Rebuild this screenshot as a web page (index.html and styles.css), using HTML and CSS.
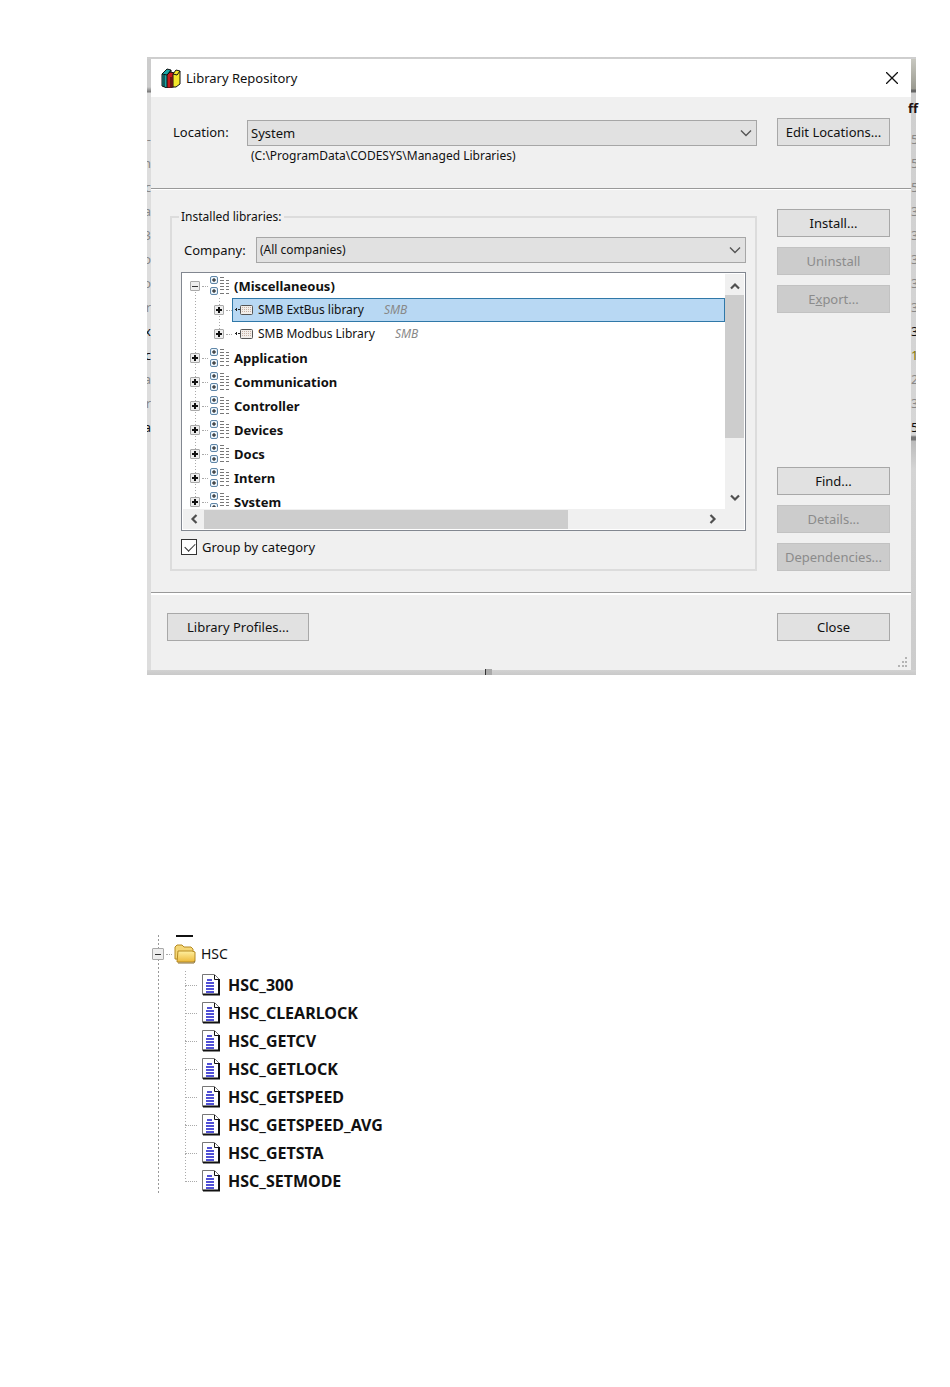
FILE: index.html
```html
<!DOCTYPE html>
<html lang="en">
<head>
<meta charset="utf-8">
<title>Library Repository</title>
<link rel="stylesheet" href="styles.css">
</head>
<body>
<svg class="defs" aria-hidden="true">
  <symbol id="cat" viewBox="0 0 20 20">
    <g fill="#eaf3fa" stroke="#5f86a8"><rect x=".5" y=".5" width="7" height="7" rx="1.500"/><rect x=".5" y="11.500" width="7" height="7" rx="1.500"/></g>
    <path d="M2 4h4M4 2v4M2 15h4M4 13v4" stroke="#111"/>
    <path d="M10 1.500h4M10 4.500h4M10 7.500h4M10 10.500h4M10 13.500h4M10 17.500h4M16 4.500h3M16 7.500h3M16 10.500h3M16 13.500h3M16 17.500h3" stroke="#777"/>
  </symbol>
  <symbol id="lib" viewBox="0 0 18 12">
    <path d="M0 5.500h2M3 5.500h3M1.500 4v3" stroke="#222"/>
    <rect x="5.500" y="1.500" width="12" height="9" rx="1" fill="#f2eeea" stroke="#555"/>
    <path d="M7 3.500h9M7 5.500h9M7 7.500h9" stroke="#c9b3a6" stroke-dasharray="1 1"/>
  </symbol>
  <symbol id="doc" viewBox="0 0 18 22">
    <path d="M.5 .5h12l5 5v15H.5z" fill="#fff" stroke="#777"/>
    <path d="M12.500 1v4.500h5" fill="none" stroke="#111"/>
    <path d="M17 5v15.500H1" fill="none" stroke="#111" stroke-width="2"/>
    <path d="M5 6h5M4 9h8M4 12h8M4 15h8M4 18h8" stroke="#1717c8" stroke-width="1.600"/>
  </symbol>
  <symbol id="chev" viewBox="0 0 12 8"><path d="M1 1.500l5 5 5-5" fill="none" stroke="#555" stroke-width="1.400"/></symbol>
  <symbol id="arrow" viewBox="0 0 10 8"><path d="M1 1.500l4 4 4-4" fill="none" stroke="#505050" stroke-width="2.200"/></symbol>
</svg>
<main class="page">
  <section class="shot">
    <div class="edge edge-left" aria-hidden="true">
      <i>-</i><i>n</i><i>c</i><i>a</i><i>3</i><i>o</i><i>o</i><i>r</i><i class="dark">x</i><i class="dark">c</i><i>a</i><i>r</i><i class="dark">a</i>
    </div>
    <div class="dialog" role="dialog" aria-labelledby="dlg-title">
      <header class="titlebar">
        <svg class="books" viewBox="0 0 20 20"><path d="M1 6l5-5 4 1v16l-4 2-5-2z" fill="#1aa5a5" stroke="#111"/><path d="M3 7v12M1 6l5 1 4-5" stroke="#111" fill="none"/><path d="M6 7l3-3 5 1v13l-4 2H6z" fill="#c51a1a" stroke="#111"/><path d="M10 9v10" stroke="#111"/><path d="M12 6l3-4 4 1v13l-4 3h-3z" fill="#f4e62a" stroke="#111"/><path d="M12 6l4 1 3-4" stroke="#111" fill="none"/></svg>
        <h1 id="dlg-title">Library Repository</h1>
        <button class="close" aria-label="Close window"><svg viewBox="0 0 12 12"><path d="M0 0l12 12M12 0L0 12" stroke="#111" stroke-width="1.300"/></svg></button>
      </header>
      <div class="location">
        <label for="loc">Location:</label>
        <div class="loc-field">
          <div class="combo"><select id="loc"><option>System</option></select><svg class="chev"><use href="#chev"/></svg></div>
          <p>(C:\ProgramData\CODESYS\Managed Libraries)</p>
        </div>
        <button class="btn">Edit Locations...</button>
      </div>
      <div class="content">
        <fieldset class="group">
          <legend>Installed libraries:</legend>
          <div class="company">
            <label for="comp">Company:</label>
            <div class="combo small"><select id="comp"><option>(All companies)</option></select><svg class="chev"><use href="#chev"/></svg></div>
          </div>
          <div class="treebox">
            <ul class="tree">
              <li><div class="row"><button class="exp minus" aria-label="Collapse"></button><span class="dots"></span><svg class="cat"><use href="#cat"/></svg><b>(Miscellaneous)</b></div>
                <ul>
                  <li class="row"><button class="exp" aria-label="Expand"></button><span class="dots"></span><div class="leaf selected"><svg class="lib"><use href="#lib"/></svg><span>SMB ExtBus library</span><em>SMB</em></div></li>
                  <li class="row"><button class="exp" aria-label="Expand"></button><span class="dots"></span><div class="leaf"><svg class="lib"><use href="#lib"/></svg><span>SMB Modbus Library</span><em>SMB</em></div></li>
                </ul>
              </li>
              <li class="row"><button class="exp" aria-label="Expand"></button><span class="dots"></span><svg class="cat"><use href="#cat"/></svg><b>Application</b></li>
              <li class="row"><button class="exp" aria-label="Expand"></button><span class="dots"></span><svg class="cat"><use href="#cat"/></svg><b>Communication</b></li>
              <li class="row"><button class="exp" aria-label="Expand"></button><span class="dots"></span><svg class="cat"><use href="#cat"/></svg><b>Controller</b></li>
              <li class="row"><button class="exp" aria-label="Expand"></button><span class="dots"></span><svg class="cat"><use href="#cat"/></svg><b>Devices</b></li>
              <li class="row"><button class="exp" aria-label="Expand"></button><span class="dots"></span><svg class="cat"><use href="#cat"/></svg><b>Docs</b></li>
              <li class="row"><button class="exp" aria-label="Expand"></button><span class="dots"></span><svg class="cat"><use href="#cat"/></svg><b>Intern</b></li>
              <li class="row"><button class="exp" aria-label="Expand"></button><span class="dots"></span><svg class="cat"><use href="#cat"/></svg><b>System</b></li>
            </ul>
            <div class="vbar"><svg class="arrow up"><use href="#arrow"/></svg><span class="thumb"></span><svg class="arrow"><use href="#arrow"/></svg></div>
            <div class="hbar"><svg class="arrow left"><use href="#arrow"/></svg><span class="track"><span class="thumb"></span></span><svg class="arrow right"><use href="#arrow"/></svg></div>
          </div>
          <label class="check"><input type="checkbox" checked>Group by category</label>
        </fieldset>
        <div class="side">
          <button class="btn">Install...</button>
          <button class="btn" disabled>Uninstall</button>
          <button class="btn" disabled>E<u>x</u>port...</button>
          <button class="btn push">Find...</button>
          <button class="btn" disabled>Details...</button>
          <button class="btn" disabled>Dependencies...</button>
        </div>
      </div>
      <footer class="foot">
        <button class="btn wide">Library Profiles...</button>
        <button class="btn">Close</button>
        <svg class="grip" viewBox="0 0 10 10"><path d="M7 0h2v2H7zM4 4h2v2H4zM7 4h2v2H7zM0 8h2v2H0zM4 8h2v2H4zM7 8h2v2H7z" fill="#b4b4b4"/></svg>
      </footer>
    </div>
    <div class="edge edge-right" aria-hidden="true">
      <b class="head">ff</b>
      <i>5</i><i>5</i><i>5</i><i>3</i><i>3</i><i>3</i><i>3</i><i>3</i><i class="dark">3</i><i class="dark mark">1</i><i>2</i><i>3</i><i class="dark">5</i>
    </div>
    <span class="tick"></span>
  </section>

  <section class="hsc">
    <span class="dash"></span>
    <div class="hsc-root"><button class="exp minus" aria-label="Collapse"></button><span class="dots"></span>
      <svg class="folder" viewBox="0 0 22 20"><defs><linearGradient id="fg" x1="0" y1="0" x2="0" y2="1"><stop offset="0" stop-color="#fff0a0"/><stop offset="1" stop-color="#edb93a"/></linearGradient></defs><path d="M1 15V3l2-2h5l2 2h7l2 2v11z" fill="#f5d777" stroke="#b58a22"/><path d="M4 7h14l3 1v9l-2 1H3z" fill="url(#fg)" stroke="#b58a22"/><path d="M4 19h16l1-2" fill="none" stroke="#8a6f30"/></svg>
      <span>HSC</span></div>
    <ul class="hsc-list">
      <li><svg><use href="#doc"/></svg><b>HSC_300</b></li>
      <li><svg><use href="#doc"/></svg><b>HSC_CLEARLOCK</b></li>
      <li><svg><use href="#doc"/></svg><b>HSC_GETCV</b></li>
      <li><svg><use href="#doc"/></svg><b>HSC_GETLOCK</b></li>
      <li><svg><use href="#doc"/></svg><b>HSC_GETSPEED</b></li>
      <li><svg><use href="#doc"/></svg><b>HSC_GETSPEED_AVG</b></li>
      <li><svg><use href="#doc"/></svg><b>HSC_GETSTA</b></li>
      <li><svg><use href="#doc"/></svg><b>HSC_SETMODE</b></li>
    </ul>
  </section>
</main>
</body>
</html>
```
FILE: styles.css
```css
* { box-sizing: border-box; }
body { margin: 0; background: #fff; color: #111; font: 13px/16px "Noto Sans", sans-serif; }
ul, p, h1, fieldset { margin: 0; padding: 0; }
ul { list-style: none; }
button, select { font: inherit; color: inherit; padding: 0; }
svg { display: block; flex: none; }
.defs { position: absolute; width: 0; height: 0; }
.page { padding: 57px 34px 0 147px; }

.shot { position: relative; display: grid; grid-template-columns: 4px 1fr 5px; padding: 2px 0 5px; background: linear-gradient(#cdcdcd, #d8d8d8 8px, #d8d8d8 calc(100% - 8px), #c9c9c9); }
.edge { position: relative; padding-top: 68px; color: #888; background: linear-gradient(#ccc 28px, #999 31px, #777 33px, #ddd 34px); }
.edge i { display: block; height: 24px; line-height: 24px; font-style: normal; direction: rtl; overflow: hidden; }
.edge .dark { color: #111; }
.edge-right { background: linear-gradient(#c8c8c0, #9a9a90 30px, #666 31px, #666 33px, #cfcfcf 34px, #d6d6d6 376px, #777 378px, #777 381px, #bbb 382px, #d4d4d4 410px, #ccc); padding-top: 40px; }
.edge-right i { direction: ltr; }
.edge-right .head { display: block; height: 28px; margin-left: -3px; line-height: 18px; color: #211; }
.edge-right .mark { color: #870; }
.tick { position: absolute; left: 44%; bottom: 0; width: 7px; height: 6px; border-left: 1px solid #333; background: #aaa; }

.dialog { background: #f0f0f0; min-width: 0; }
.titlebar { display: flex; align-items: center; height: 38px; padding: 0 12px 0 10px; background: #fff; }
.books { width: 20px; height: 20px; margin-right: 5px; }
.titlebar h1 { flex: 1; font-size: 13px; font-weight: 400; }
.close { width: 13px; height: 13px; border: 0; background: none; }
.close svg { width: 12px; height: 12px; }

.location { display: flex; align-items: flex-start; padding: 21px 21px 0 22px; height: 92px; border-bottom: 1px solid #999; }
.location > label { width: 74px; padding-top: 6px; }
.loc-field { flex: 1; margin-right: 20px; padding-top: 2px; }
.loc-field p { padding: 2px 0 0 4px; font-size: 12px; }
.combo { display: grid; grid-template: 26px / 1fr; flex: 1; align-items: center; }
.combo select { grid-area: 1 / 1; width: 100%; height: 26px; padding-left: 3px; border: 1px solid #a6a6a6; border-radius: 0; background: #e1e1e1; appearance: none; }
.combo.small select { font-size: 12px; }
.chev { grid-area: 1 / 1; justify-self: end; width: 12px; height: 8px; margin-right: 5px; pointer-events: none; }
.btn { width: 113px; height: 28px; flex: none; border: 1px solid #a8a8a8; background: #e1e1e1; text-align: center; }
.btn:disabled { background: #ccc; border-color: #c2c2c2; color: #8b8b8b; }

.content { display: flex; gap: 20px; padding: 19px 21px 21px 19px; border-top: 1px solid #fff; border-bottom: 1px solid #999; }
.group { flex: 1; min-width: 0; border: 2px solid #dcdcdc; padding: 12px 9px 14px 9px; }
.group legend { padding: 0 2px; margin-left: -2px; font-size: 12px; }
.company { display: flex; align-items: center; padding-left: 3px; }
.company label { width: 72px; }
.treebox { display: grid; grid-template: 235px 20px / 1fr 19px; margin-top: 9px; padding: 1px; border: 1px solid #828790; background: #fff; }
.tree { overflow: hidden; height: 233px; }
.row { display: flex; align-items: center; height: 24px; }
.tree > li { padding-left: 7px; background: repeating-linear-gradient(#aaa 0 1px, transparent 1px 3px) 12px 0 / 1px 100% no-repeat; }
.tree > li:first-child { background-position: 12px 12px; }
.tree ul { padding-left: 24px; background: repeating-linear-gradient(#aaa 0 1px, transparent 1px 3px) 29px 0 / 1px 36px no-repeat; }
.exp { display: block; width: 10px; height: 10px; flex: none; border: 1px solid #a9a9a9; border-radius: 1px; background: linear-gradient(#111, #111) center / 6px 2px no-repeat, linear-gradient(#111, #111) center / 2px 6px no-repeat, #eee; }
.exp.minus { background: linear-gradient(#333, #333) center / 6px 1px no-repeat, #eee; }
.dots { width: 6px; margin-left: 2px; flex: none; border-top: 1px dotted #aaa; }
.cat { width: 20px; height: 20px; margin: 0 4px 0 2px; }
.leaf { display: flex; align-items: center; flex: 1; height: 24px; padding-left: 2px; border: 1px solid transparent; font-size: 12px; }
.leaf.selected { border-color: #3078a8; background: #b8d8f3; }
.lib { width: 18px; height: 12px; margin-right: 5px; }
.leaf em { margin-left: 20px; color: #888; }
.vbar { display: flex; flex-direction: column; align-items: center; padding: 8px 0 7px; background: #f0f0f0; }
.arrow { width: 10px; height: 8px; }
.up { transform: rotate(180deg); }
.left { transform: rotate(90deg); }
.right { transform: rotate(-90deg); }
.vbar .thumb { width: 100%; height: 143px; margin: 5px 0 auto; background: #cdcdcd; }
.hbar { grid-column: 1 / -1; display: flex; align-items: center; padding: 0 26px 0 6px; background: #f0f0f0; }
.hbar .track { flex: 1; margin: 0 5px; height: 19px; }
.hbar .thumb { display: block; width: 73%; height: 19px; background: #cdcdcd; }
.check { display: flex; align-items: center; margin-top: 8px; }
.check input { appearance: none; width: 16px; height: 16px; margin: 0 5px 0 0; border: 1px solid #333; background: #fff; }
.check input::after { content: ""; display: block; width: 9px; height: 5px; margin: 3px 0 0 3px; border: solid #333; border-width: 0 0 1px 1px; transform: rotate(-45deg); }
.side { display: flex; flex-direction: column; gap: 10px; width: 113px; }
.push { margin-top: auto; }
.foot { position: relative; display: flex; justify-content: space-between; height: 77px; padding: 18px 21px 0 16px; border-top: 2px solid #fff; }
.btn.wide { width: 142px; }
.grip { position: absolute; right: 3px; bottom: 3px; width: 10px; height: 10px; }

.hsc { margin-top: 260px; height: 260px; padding-left: 5px; background: repeating-linear-gradient(#999 0 2px, transparent 2px 4px) 11px 0 / 1px 100% no-repeat; font-size: 14px; }
.dash { display: block; width: 17px; height: 2px; margin-left: 24px; background: #111; }
.hsc-root { display: flex; align-items: center; height: 34px; }
.hsc-root .exp { width: 12px; height: 12px; }
.hsc-root .dots { margin: 0 2px 0 2px; }
.folder { width: 22px; height: 20px; margin-right: 5px; }
.hsc-list { padding-left: 33px; font-size: 16px; background: repeating-linear-gradient(#aaa 0 1px, transparent 1px 3px) 33px 0 / 1px calc(100% - 14px) no-repeat; }
.hsc-list li { display: flex; align-items: center; height: 28px; }
.hsc-list li::before { content: ""; width: 12px; margin-right: 5px; border-top: 1px dotted #aaa; }
.hsc-list svg { width: 18px; height: 22px; margin-right: 8px; }
```
